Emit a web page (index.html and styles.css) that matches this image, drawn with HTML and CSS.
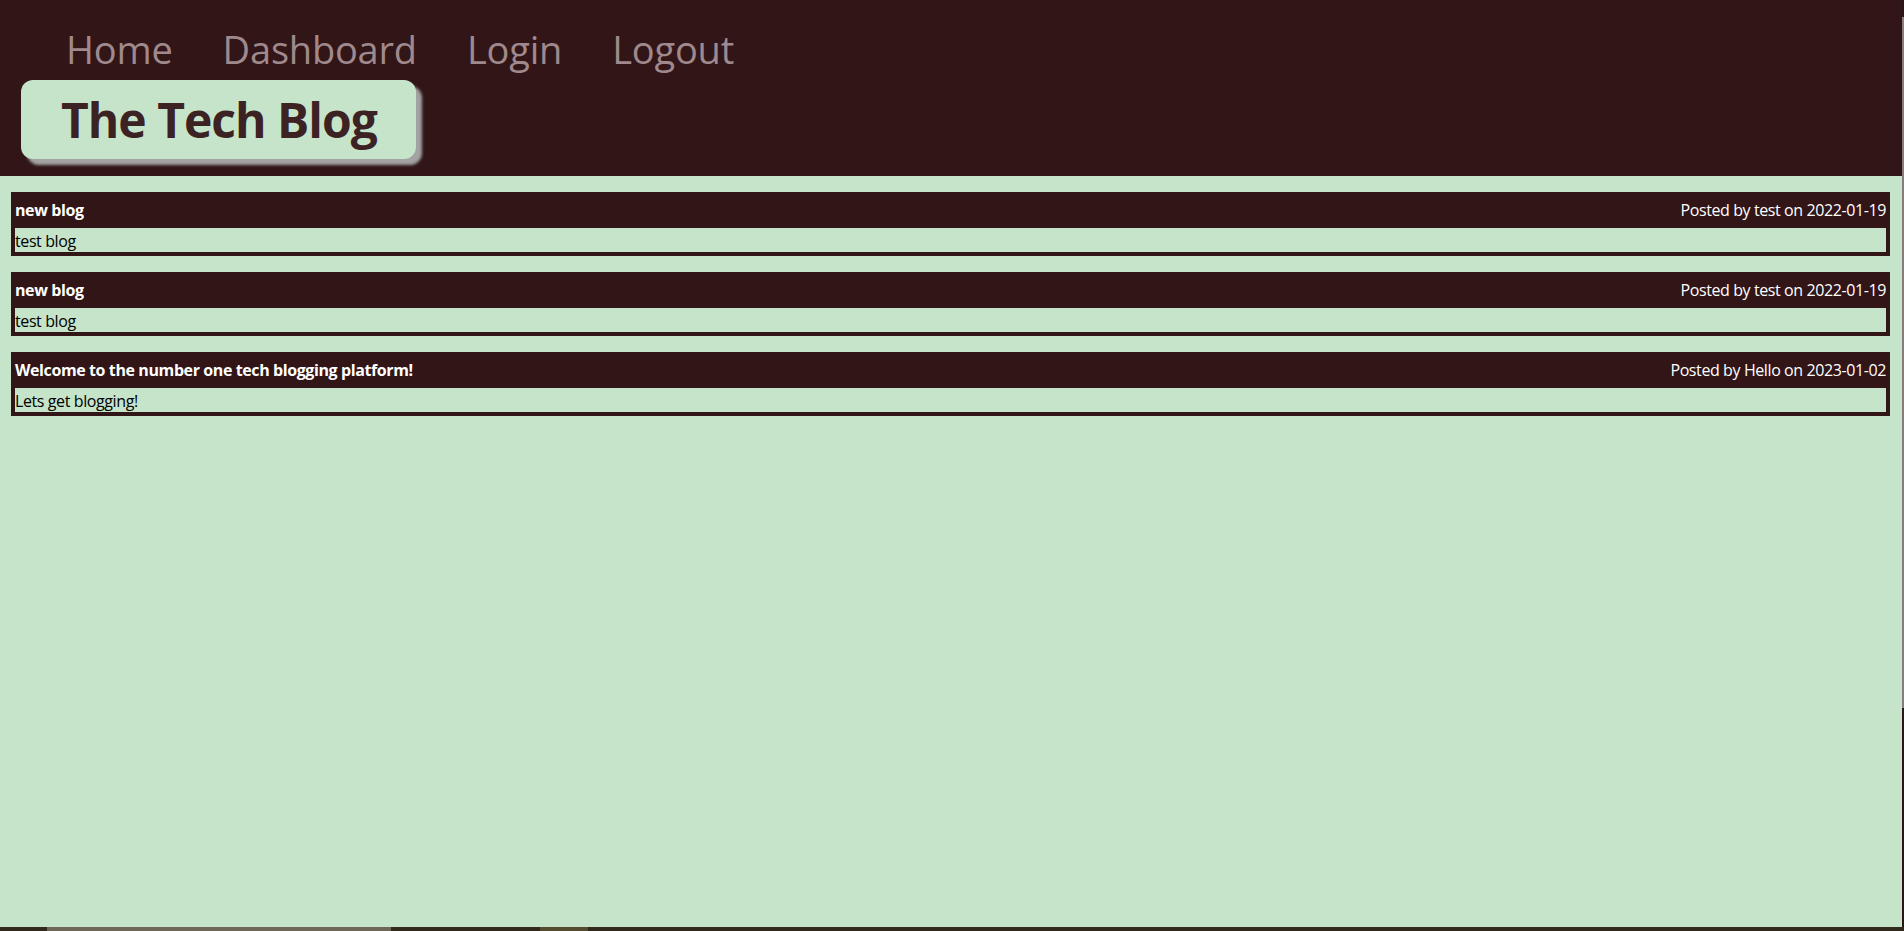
FILE: index.html
```html
<!DOCTYPE html>
<html lang="en">
<head>
<meta charset="utf-8">
<title>The Tech Blog</title>
<link rel="stylesheet" href="styles.css">
</head>
<body>
<header class="site-header">
  <nav class="nav">
    <a class="nav-link" href="#">Home</a>
    <a class="nav-link" href="#">Dashboard</a>
    <a class="nav-link" href="#">Login</a>
    <a class="nav-link" href="#">Logout</a>
  </nav>
  <div class="brand"><h1 class="brand-title">The Tech Blog</h1></div>
</header>
<main class="posts">
  <article class="post">
    <div class="post-head"><span class="post-title">new blog</span><span class="post-meta">Posted by test on 2022-01-19</span></div>
    <div class="post-body">test blog</div>
  </article>
  <article class="post">
    <div class="post-head"><span class="post-title">new blog</span><span class="post-meta">Posted by test on 2022-01-19</span></div>
    <div class="post-body">test blog</div>
  </article>
  <article class="post">
    <div class="post-head"><span class="post-title">Welcome to the number one tech blogging platform!</span><span class="post-meta">Posted by Hello on 2023-01-02</span></div>
    <div class="post-body">Lets get blogging!</div>
  </article>
</main>
<div class="vbar"><div class="vbar-thumb"></div></div>
<div class="hbar"><div class="hbar-thumb"></div><div class="hbar-mark"></div></div>
</body>
</html>
```
FILE: styles.css
```css
html, body {
  margin: 0;
  padding: 0;
}
body {
  background: #c5e4c9;
  font-family: "Open Sans", "Noto Sans", sans-serif;
  min-height: 931px;
}
.site-header {
  background: #311517;
  height: 176px;
  box-sizing: border-box;
}
.nav {
  display: flex;
  gap: 50px;
  height: 80px;
  box-sizing: border-box;
  padding: 23px 0 0 66px;
}
.nav-link {
  color: #9f898c;
  text-decoration: none;
  font-size: 38px;
  line-height: 52px;
  letter-spacing: -0.2px;
}
.brand {
  margin-left: 21px;
  width: 395px;
  height: 79px;
  box-sizing: border-box;
  background: #c5e4c9;
  border-radius: 12px;
  box-shadow: 6px 6px 3px #a3a3a3;
  padding-left: 40px;
  padding-top: 3px;
}
.brand-title {
  margin: 0;
  font-size: 48px;
  line-height: 74px;
  font-weight: 700;
  color: #3d2224;
  letter-spacing: -1px;
}
.posts {
  padding: 16px 14px 0 11px;
  display: flex;
  flex-direction: column;
  gap: 16px;
}
.post {
  border: 4px solid #311517;
}
.post-head {
  background: #311517;
  height: 32px;
  box-sizing: border-box;
  padding-top: 3px;
  display: flex;
  justify-content: space-between;
  align-items: flex-start;
  color: #ffffff;
  font-size: 16px;
  line-height: 22px;
  letter-spacing: -0.4px;
}
.post-title {
  font-weight: 700;
}
.post-body {
  height: 24px;
  box-sizing: border-box;
  padding-top: 3px;
  font-size: 16px;
  line-height: 21px;
  color: #000;
  letter-spacing: -0.4px;
}
.vbar {
  position: fixed;
  top: 0;
  right: 0;
  width: 2px;
  height: 931px;
  background: #2a1517;
}
.vbar-thumb {
  margin-top: 17px;
  height: 691px;
  background: #877c7e;
}
.hbar {
  position: fixed;
  left: 0;
  bottom: 0;
  width: 1904px;
  height: 4px;
  background: #312a1c;
}
.hbar-thumb {
  position: absolute;
  left: 47px;
  top: 0;
  width: 344px;
  height: 4px;
  background: #6e6656;
}
.hbar-mark {
  position: absolute;
  left: 540px;
  top: 0;
  width: 48px;
  height: 4px;
  background: #554c30;
}
```
